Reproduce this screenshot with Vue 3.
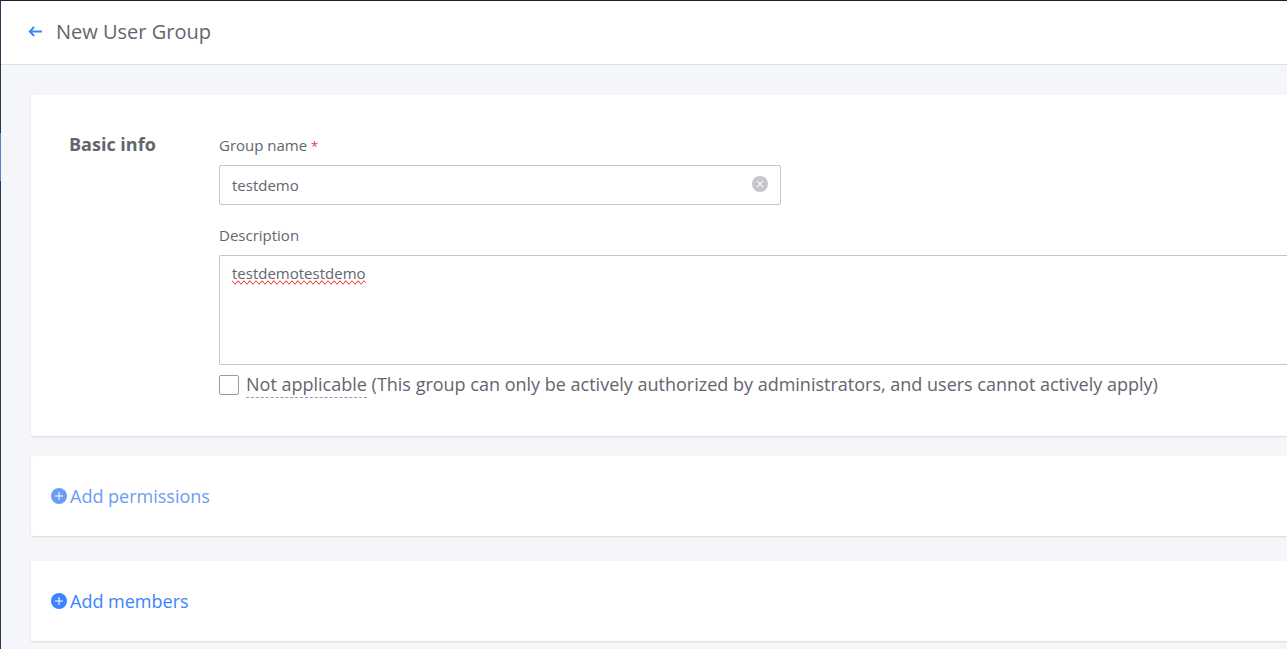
<script setup>
import { ref } from 'vue'

const name = ref('testdemo')
const description = ref('testdemotestdemo')
const notApplicable = ref(false)
const actions = [
  { label: 'Add permissions', tone: 'soft' },
  { label: 'Add members', tone: 'strong' },
]
</script>

<template>
  <div class="page">
    <i class="nav-marker" aria-hidden="true"></i>
    <header class="topbar">
      <button class="back" type="button" aria-label="Back">
        <svg width="14" height="12" viewBox="0 0 14 12" fill="none" stroke="currentColor" stroke-width="1.8">
          <path d="M14 5.5H2M6.2 1 1.7 5.5 6.2 10" />
        </svg>
      </button>
      <h1>New User Group</h1>
    </header>

    <main class="content">
      <section class="card basic">
        <h2>Basic info</h2>
        <div class="fields">
          <label class="label" for="group-name">Group name <span class="required">*</span></label>
          <div class="input-wrap">
            <input id="group-name" v-model="name" type="text" spellcheck="false" />
            <button class="clear" type="button" aria-label="Clear" @click="name = ''">
              <svg width="16" height="16" viewBox="0 0 16 16">
                <circle cx="8" cy="8" r="8" fill="#c4c6cc" />
                <path d="M5.2 5.2l5.6 5.6M10.8 5.2l-5.6 5.6" stroke="#fff" stroke-width="1.1" />
              </svg>
            </button>
          </div>
          <label class="label" for="description">Description</label>
          <textarea id="description" v-model="description" spellcheck="false"></textarea>
          <div class="check-row">
            <input id="not-applicable" v-model="notApplicable" type="checkbox" />
            <label for="not-applicable"><span class="term">Not applicable</span> (This group can only be actively authorized by administrators, and users cannot actively apply)</label>
          </div>
        </div>
      </section>

      <section v-for="action in actions" :key="action.label" class="card action">
        <button class="add" :class="action.tone" type="button">
          <svg width="16" height="16" viewBox="0 0 16 16">
            <circle cx="8" cy="8" r="8" fill="currentColor" />
            <path d="M4 8h8M8 4v8" stroke="#fff" stroke-width="1.1" />
          </svg>
          <span>{{ action.label }}</span>
        </button>
      </section>
    </main>
  </div>
</template>

<style>
body {
  overflow: hidden;
}
</style>

<style scoped>
* {
  box-sizing: border-box;
}
.page {
  position: relative;
  min-height: 100vh;
  border-top: 1px solid #1c1f2e;
  border-left: 1px solid #2c354d;
  background: #f5f6fa;
  color: #63656e;
  font-family: "Open Sans", "Noto Sans", sans-serif;
  font-size: 18px;
}
button,
input,
textarea {
  margin: 0;
  padding: 0;
  border: 0;
  background: none;
  color: inherit;
  font: inherit;
}
svg {
  display: block;
}
.nav-marker {
  position: absolute;
  top: 132px;
  left: -1px;
  width: 1px;
  height: 48px;
  background: #4c84d8;
}
.topbar {
  display: flex;
  align-items: center;
  gap: 14px;
  height: 64px;
  padding: 0 27px 2px;
  border-bottom: 1px solid #dcdee5;
  background: #fff;
}
.back {
  color: #3a84ff;
}
h1 {
  margin: 0;
  font-size: 20px;
  font-weight: 400;
  line-height: 28px;
}
.content {
  padding: 30px 0 0 30px;
}
.card {
  border-radius: 2px 0 0 2px;
  background: #fff;
  box-shadow: 0 1px 2px rgba(0, 0, 0, 0.12);
}
.basic {
  display: flex;
  padding: 38px 0 31px 38px;
}
h2 {
  flex: none;
  width: 150px;
  margin: 0;
  font-size: 18px;
  font-weight: 700;
  line-height: 22px;
}
.fields {
  flex: 1;
  min-width: 0;
}
.label {
  display: block;
  height: 32px;
  font-size: 15px;
  line-height: 24px;
}
.required {
  color: #ea3636;
  font-size: 13px;
}
.input-wrap {
  position: relative;
  width: 562px;
  max-width: 100%;
  margin-bottom: 18px;
}
.input-wrap input {
  display: block;
  width: 100%;
  height: 40px;
  padding: 0 40px 0 12px;
  border: 1px solid #c4c6cc;
  border-radius: 2px;
  font-size: 15px;
}
.clear {
  position: absolute;
  top: 11px;
  right: 13px;
}
textarea {
  display: block;
  width: 100%;
  height: 110px;
  padding: 6px 12px;
  border: 1px solid #c4c6cc;
  border-right: 0;
  border-radius: 2px 0 0 2px;
  font-size: 15px;
  line-height: 22px;
  resize: none;
  text-decoration: spelling-error;
}
.check-row {
  display: flex;
  align-items: center;
  gap: 7px;
  height: 40px;
  white-space: nowrap;
}
.check-row label {
  padding-bottom: 2px;
}
.check-row input {
  flex: none;
  width: 20px;
  height: 20px;
  border: 1px solid #979ba5;
  border-radius: 2px;
  appearance: none;
}
.check-row input:checked {
  background: #3a84ff;
}
.term {
  display: inline-block;
  border-bottom: 1px dashed #979ba5;
  line-height: 26px;
}
.action {
  display: flex;
  align-items: center;
  height: 80px;
  margin-top: 20px;
  padding-left: 20px;
}
.action + .action {
  margin-top: 25px;
}
.add {
  display: flex;
  align-items: center;
  gap: 3px;
  line-height: 24px;
}
.soft {
  color: #699df4;
}
.strong {
  color: #3a84ff;
}
</style>
